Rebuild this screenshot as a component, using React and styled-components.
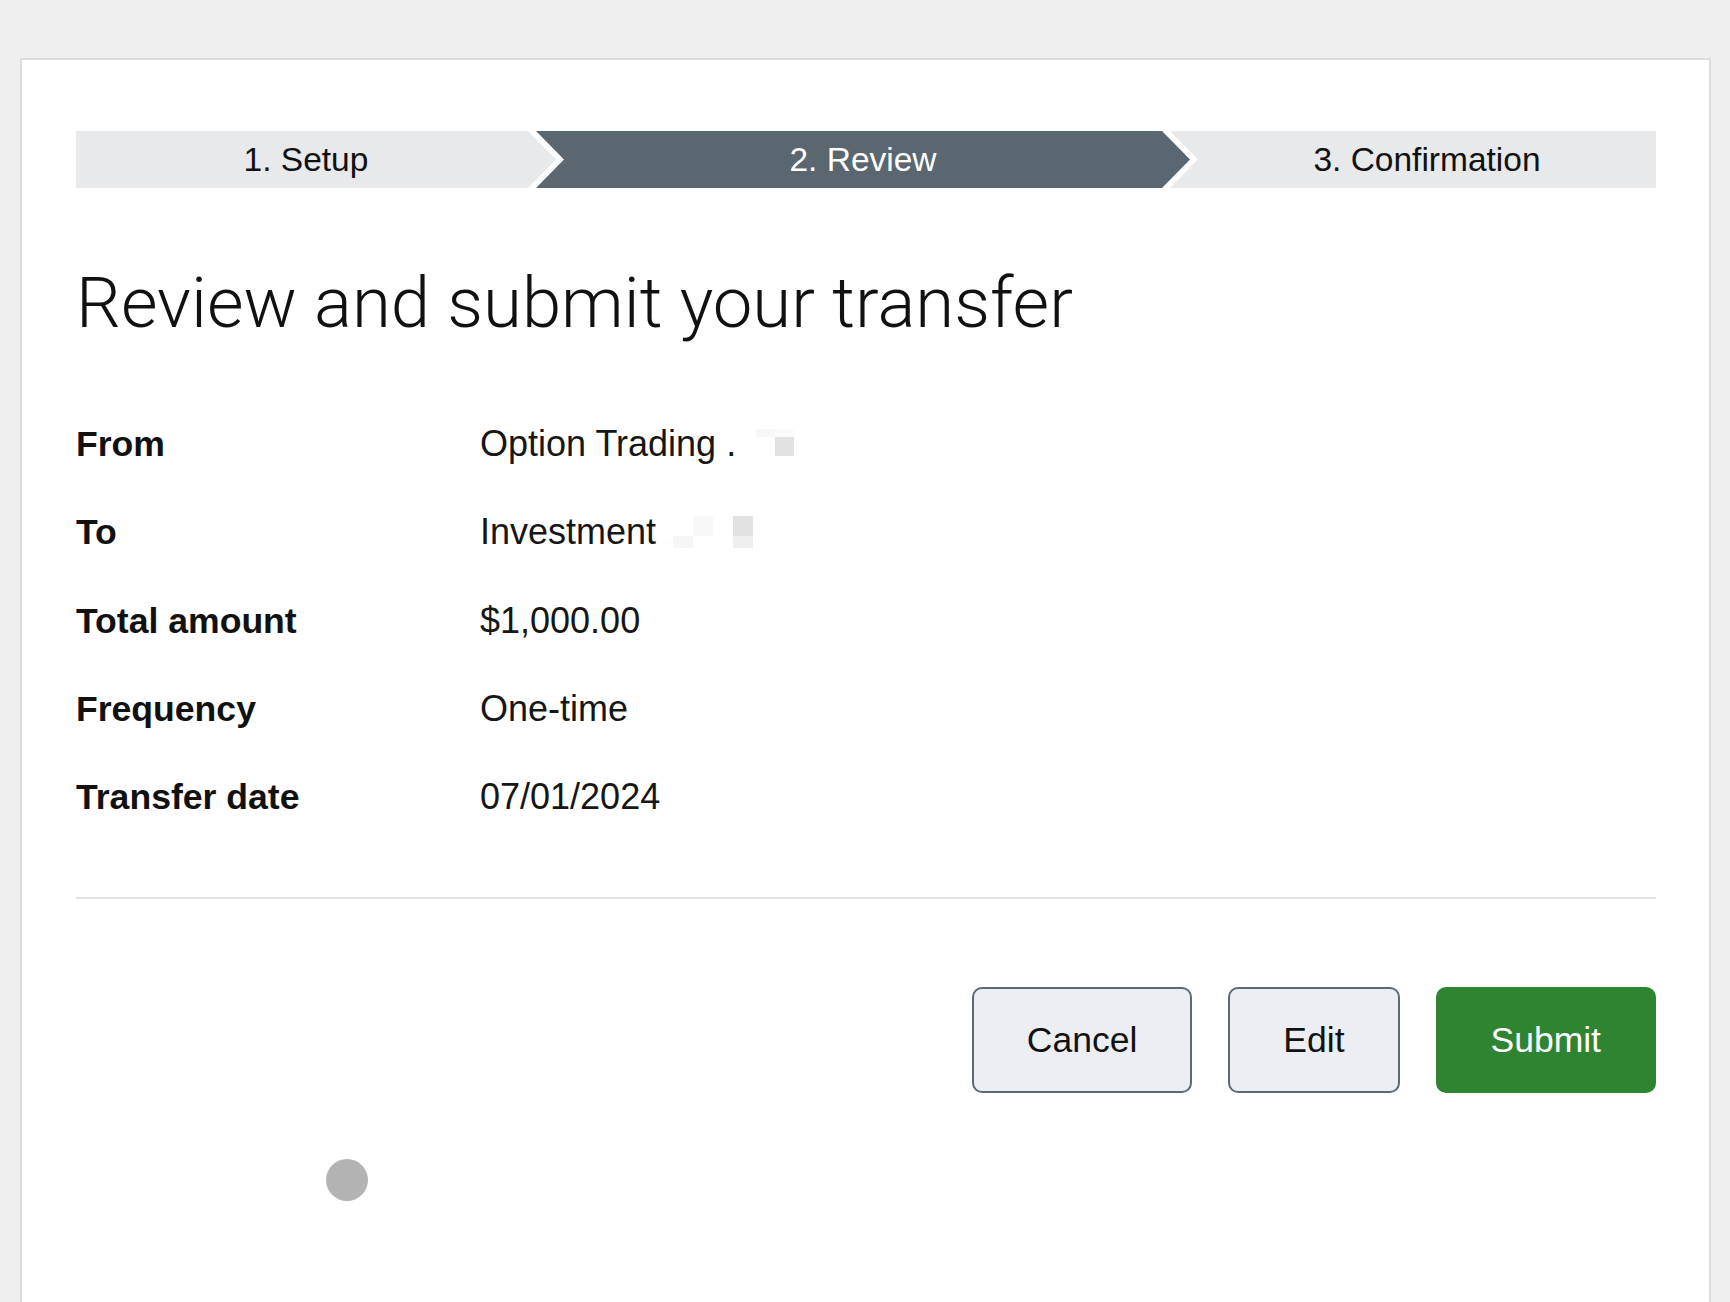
import React from "react";
import styled, { createGlobalStyle } from "styled-components";

const GlobalStyle = createGlobalStyle`
  html, body {
    margin: 0;
    padding: 0;
    background: #efefef;
  }
  body {
    font-family: "Liberation Sans", Arial, Helvetica, sans-serif;
    color: #111;
  }
  * { box-sizing: border-box; }
`;

const Page = styled.div`
  padding: 58px 19px 0 20px;
  min-height: 100vh;
`;

const Card = styled.main`
  background: #fff;
  border: 2px solid #dcdcdc;
  border-bottom: none;
  min-height: calc(100vh - 58px);
  padding: 71px 53px 0 54px;
`;

const Stepper = styled.ol`
  display: flex;
  list-style: none;
  margin: 0;
  padding: 0;
  height: 57px;
`;

const clips = {
  first: "polygon(0 0, calc(100% - 28px) 0, 100% 50%, calc(100% - 28px) 100%, 0 100%)",
  middle:
    "polygon(0 0, calc(100% - 28px) 0, 100% 50%, calc(100% - 28px) 100%, 0 100%, 28px 50%)",
  last: "polygon(0 0, 100% 0, 100% 100%, 0 100%, 28px 50%)",
};

const Step = styled.li`
  flex: ${(p) => (p.$width ? `0 0 ${p.$width}px` : "1 1 auto")};
  margin-left: ${(p) => (p.$kind === "first" ? "0" : "-20px")};
  padding-left: ${(p) => (p.$kind === "first" ? "8px" : "28px")};
  padding-right: ${(p) => (p.$kind === "last" ? "0" : "28px")};
  clip-path: ${(p) => clips[p.$kind]};
  background: ${(p) => (p.$active ? "#5a6670" : "#e7e9eb")};
  color: ${(p) => (p.$active ? "#fff" : "#111")};
  font-size: 33.5px;
  line-height: 57px;
  text-align: center;
  white-space: nowrap;
`;

const Title = styled.h1`
  margin: 75px 0 57px;
  font-family: Roboto, "Liberation Sans", Arial, sans-serif;
  font-weight: 300;
  font-size: 70.7px;
  line-height: 80px;
  color: #111;
`;

const Details = styled.dl`
  margin: 0;
  padding: 0;
`;

const Row = styled.div`
  display: grid;
  grid-template-columns: 404px 1fr;
  align-items: center;
  height: 88.3px;
`;

const Label = styled.dt`
  font-weight: 700;
  font-size: 35.6px;
  line-height: 40px;
  color: #111;
`;

const Value = styled.dd`
  margin: 0;
  font-size: 36px;
  line-height: 40px;
  color: #161616;
  white-space: nowrap;
`;

const Mosaic = styled.span`
  display: inline-block;
  overflow: hidden;
  margin-left: ${(p) => p.$gap}px;
  vertical-align: ${(p) => p.$drop}px;
`;

const MosaicGrid = styled.span`
  display: grid;
  grid-template-columns: ${(p) => p.$cols};
  grid-template-rows: ${(p) => p.$rows};
`;

const Cell = styled.span`
  display: block;
  background: ${(p) => p.$c};
`;

const Divider = styled.hr`
  margin: 56px 0 0;
  border: none;
  height: 2px;
  background: #e2e2e2;
`;

const Actions = styled.div`
  display: flex;
  justify-content: flex-end;
  gap: 36px;
  margin-top: 88px;
`;

const Button = styled.button`
  font-family: "Liberation Sans", Arial, Helvetica, sans-serif;
  font-size: 35.5px;
  line-height: 40px;
  padding: 31px 53px;
  border-radius: 10px;
  border: 2px solid ${(p) => (p.$primary ? "#2e8431" : "#5d6973")};
  background: ${(p) => (p.$primary ? "#2e8431" : "#eceef1")};
  color: ${(p) => (p.$primary ? "#fff" : "#111")};
  cursor: pointer;
`;

const Dot = styled.div`
  width: 42px;
  height: 42px;
  border-radius: 50%;
  background: #b3b3b3;
  margin: 66px 0 0 250px;
`;

const fromCells = ["#f7f7f7", "#fbfbfb", "#fff", "#e1e1e1"];
const toCells = [
  "#fff", "#f8f8f8", "#fff", "#e2e2e2",
  "#f6f6f6", "#fff", "#fff", "#efefef",
];

const rows = [
  {
    label: "From",
    value: "Option Trading .",
    mosaic: { cols: "19px 19px", rows: "8px 19px", gap: 20, drop: 0, cells: fromCells },
  },
  {
    label: "To",
    value: "Investment",
    mosaic: { cols: "20px 20px 20px 20px", rows: "20px 12px", gap: 17, drop: -4, cells: toCells },
  },
  { label: "Total amount", value: "$1,000.00" },
  { label: "Frequency", value: "One-time" },
  { label: "Transfer date", value: "07/01/2024" },
];

export default function App() {
  return (
    <>
      <GlobalStyle />
      <Page>
        <Card>
          <Stepper>
            <Step $kind="first" $width={480}>1. Setup</Step>
            <Step $kind="middle" $width={654} $active>2. Review</Step>
            <Step $kind="last">3. Confirmation</Step>
          </Stepper>

          <Title>Review and submit your transfer</Title>

          <Details>
            {rows.map((r) => (
              <Row key={r.label}>
                <Label>{r.label}</Label>
                <Value>
                  {r.value}
                  {r.mosaic && (
                    <Mosaic $gap={r.mosaic.gap} $drop={r.mosaic.drop} aria-hidden="true">
                      <MosaicGrid $cols={r.mosaic.cols} $rows={r.mosaic.rows}>
                        {r.mosaic.cells.map((c, i) => (
                          <Cell key={i} $c={c} />
                        ))}
                      </MosaicGrid>
                    </Mosaic>
                  )}
                </Value>
              </Row>
            ))}
          </Details>

          <Divider />

          <Actions>
            <Button type="button">Cancel</Button>
            <Button type="button">Edit</Button>
            <Button type="button" $primary>Submit</Button>
          </Actions>

          <Dot />
        </Card>
      </Page>
    </>
  );
}
